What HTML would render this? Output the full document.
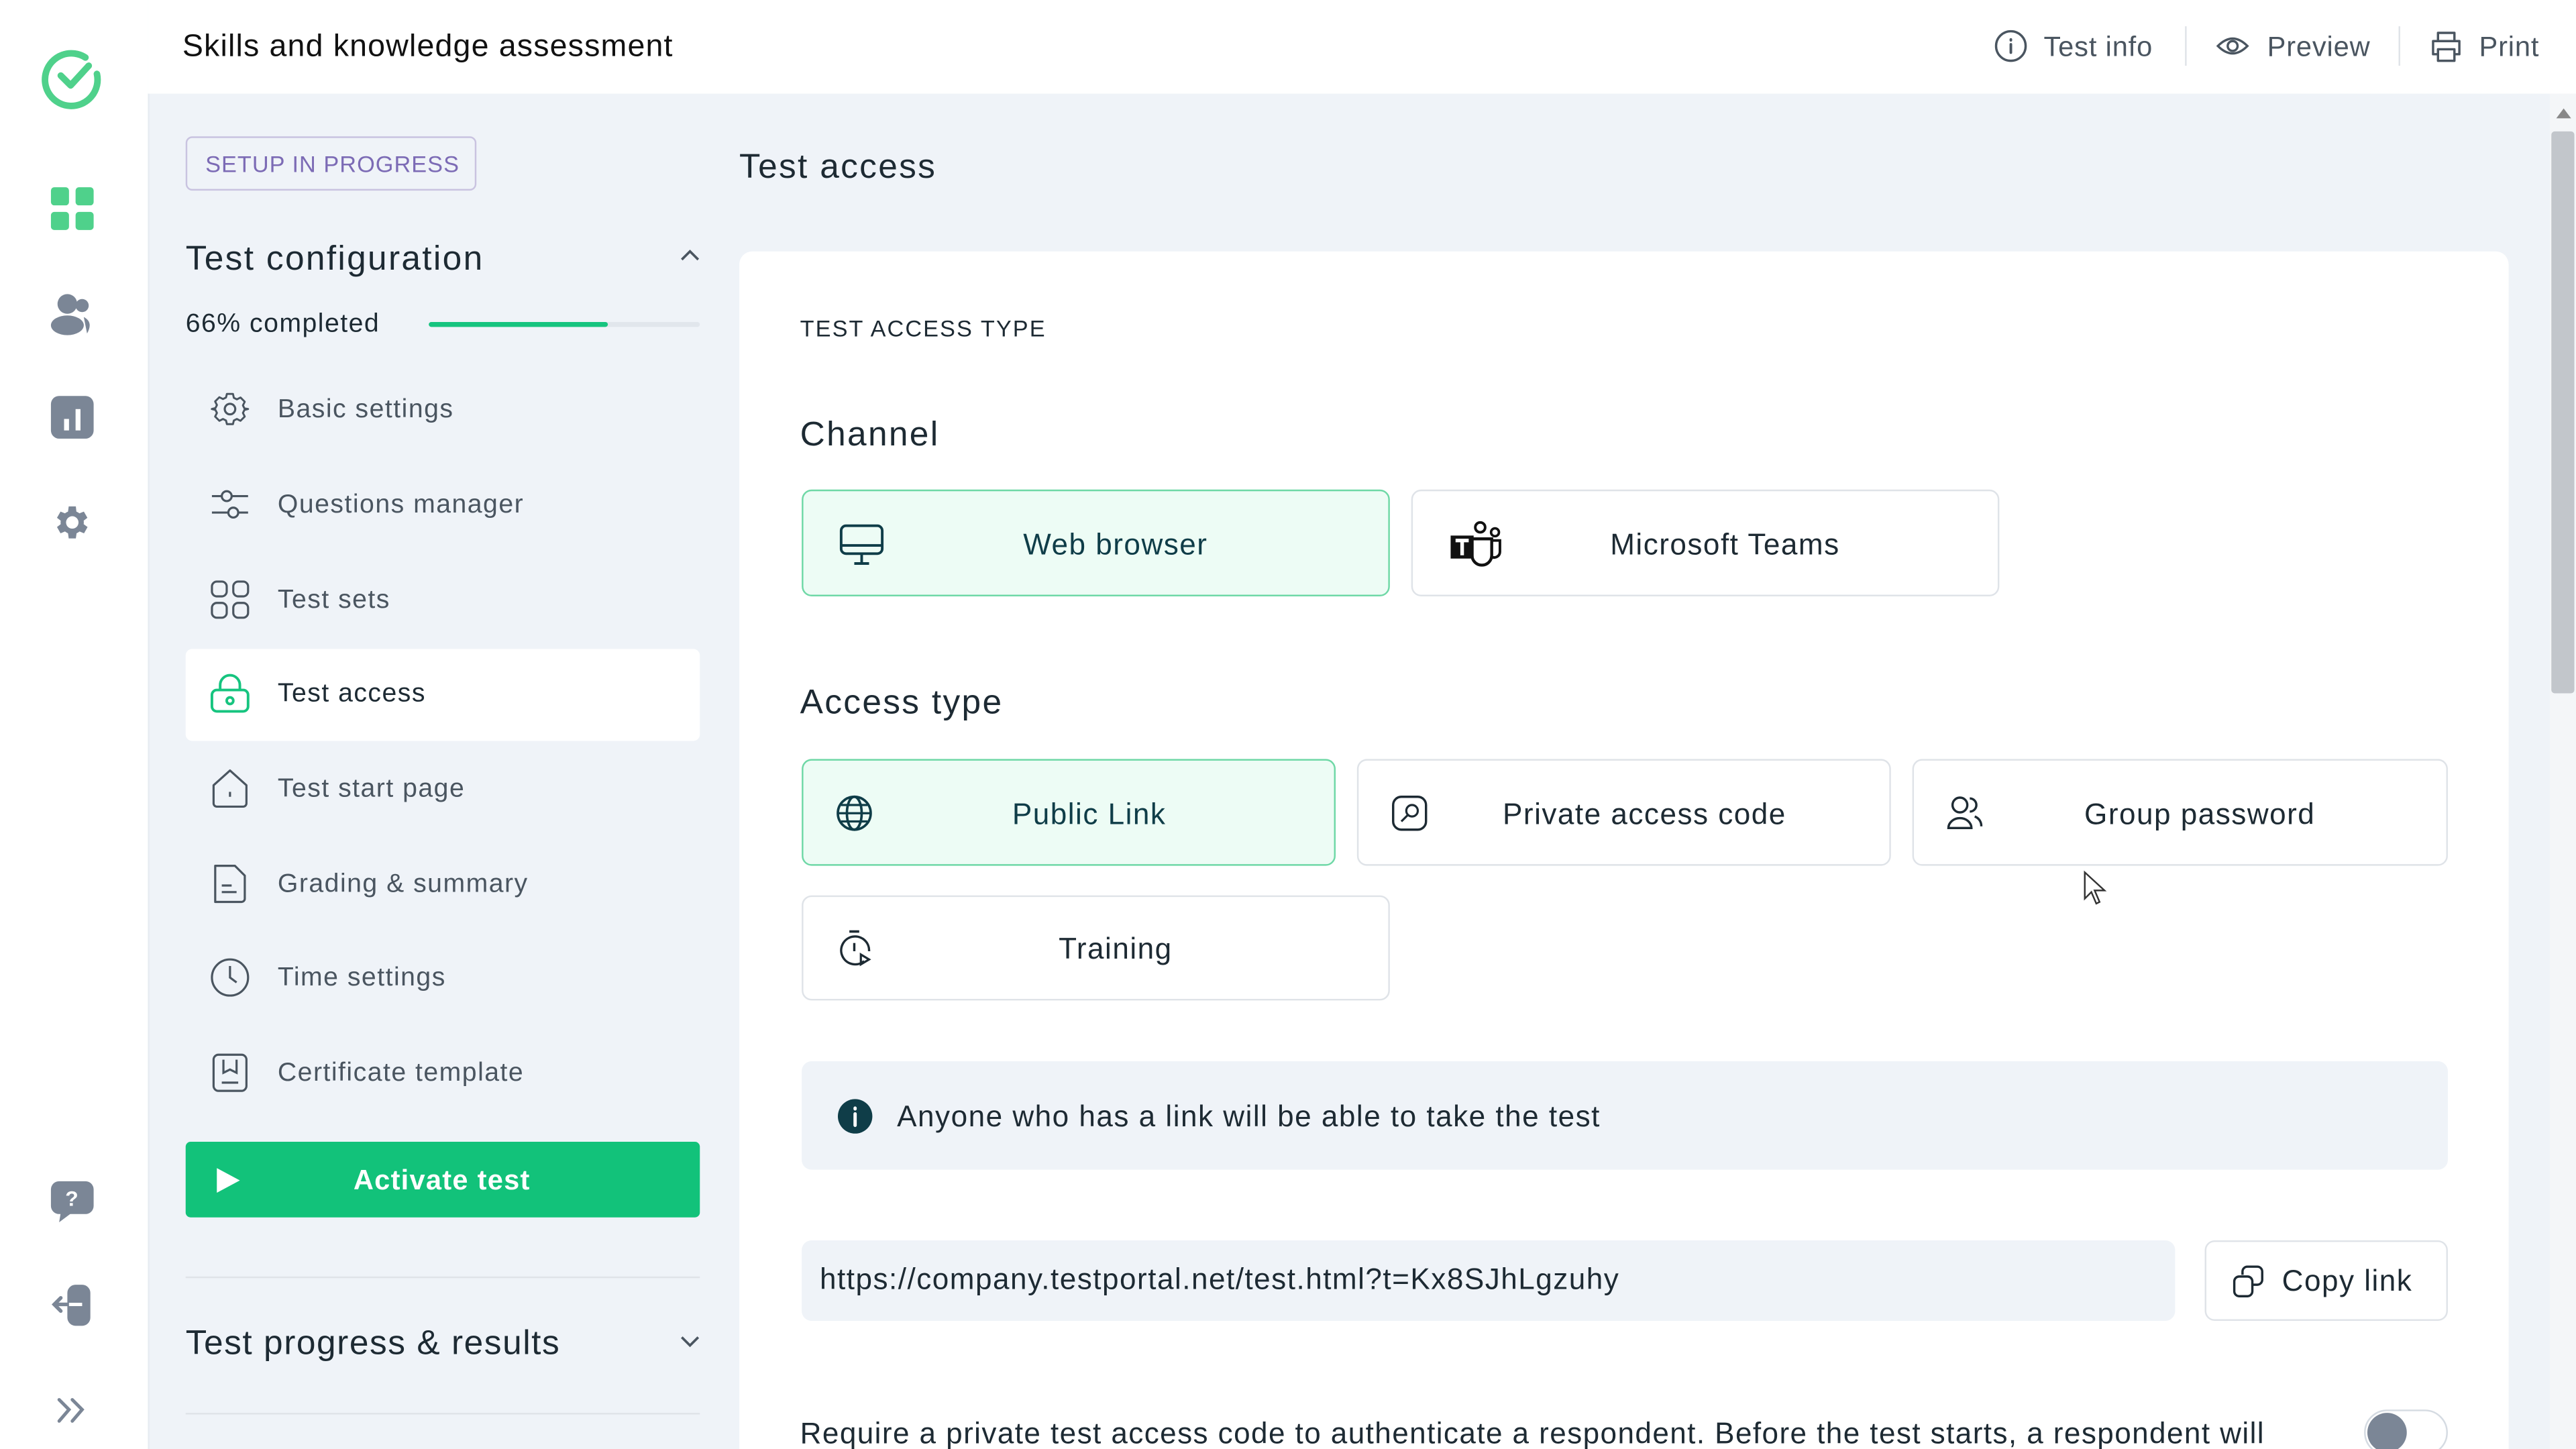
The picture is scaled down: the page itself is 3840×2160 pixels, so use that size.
<!DOCTYPE html>
<html><head><meta charset="utf-8"><style>
html,body{margin:0;padding:0;width:3840px;height:2159px;overflow:hidden;background:#eff3f8}
#f{position:absolute;left:0;top:0;width:1568px;height:882px;transform:scale(2.44898);transform-origin:0 0;font-family:"Liberation Sans",sans-serif;color:#1d2a33;background:#eff3f8;overflow:hidden;letter-spacing:.038em}
.a{position:absolute}
.t{position:absolute;white-space:nowrap;transform:translateY(-45%)}
.h{letter-spacing:.045em}
.rail{left:0;top:0;width:90px;height:882px;background:#fff;border-right:1px solid #e6ebf1}
.hdr{left:90px;top:0;width:1478px;height:57px;background:#fff}
.mi{font-size:16px;color:#4a5560}
.card{position:absolute;border:1px solid #dfe3e8;border-radius:6px;background:#fff;box-sizing:border-box}
.sel{background:#edfcf5;border-color:#6fd8a6}
.ct{position:absolute;top:50%;transform:translate(-50%,-45%);font-size:18px;white-space:nowrap;color:#1d2a33}
.sel .ct{color:#0f3d48}
svg{position:absolute;overflow:visible}
</style></head><body><div id="f">
<div class="a rail"></div>
<svg style="left:26px;top:29px" width="36" height="36" viewBox="0 0 36 36"><path d="M26 6 A16 16 0 1 0 33 16" fill="none" stroke="#4fd18b" stroke-width="4" stroke-linecap="round"/><path d="M11 17 L17 23 L28 11" fill="none" stroke="#4fd18b" stroke-width="4" stroke-linecap="round" stroke-linejoin="round"/></svg>
<svg style="left:31px;top:114px" width="26" height="26"><rect x="0" y="0" width="11" height="11" rx="2" fill="#4fd18b"/><rect x="15" y="0" width="11" height="11" rx="2" fill="#4fd18b"/><rect x="0" y="15" width="11" height="11" rx="2" fill="#4fd18b"/><rect x="15" y="15" width="11" height="11" rx="2" fill="#4fd18b"/></svg>
<svg style="left:31px;top:178px" width="26" height="26"><circle cx="10" cy="7" r="6" fill="#7b8696"/><ellipse cx="10" cy="20" rx="10" ry="6" fill="#7b8696"/><circle cx="19" cy="8" r="4" fill="#7b8696"/><path d="M20 15 q6 3 2 10" fill="#7b8696"/></svg>
<svg style="left:31px;top:241px" width="26" height="26"><rect x="0" y="0" width="26" height="26" rx="5" fill="#7b8696"/><rect x="8" y="14" width="3" height="7" fill="#fff"/><rect x="15" y="8" width="3" height="13" fill="#fff"/></svg>
<svg style="left:31px;top:305px" width="26" height="26" viewBox="0 0 24 24"><path fill="#7b8696" d="M19.4 13a7.5 7.5 0 0 0 0-2l2.1-1.6-2-3.5-2.5 1a7 7 0 0 0-1.7-1L15 3h-4l-.4 2.9a7 7 0 0 0-1.700 1l-2.5-1-2 3.5L6.5 11a7.5 7.5 0 0 0 0 2l-2.1 1.6 2 3.5 2.5-1a7 7 0 0 0 1.7 1L11 21h4l.4-2.9a7 7 0 0 0 1.7-1l2.5 1 2-3.5zM13 15.5a3.5 3.5 0 1 1 0-7 3.5 3.5 0 0 1 0 7z" transform="translate(-1 0)"/></svg>
<svg style="left:31px;top:719px" width="26" height="26"><rect x="0" y="0" width="26" height="20" rx="5" fill="#7b8696"/><path d="M6 19 L5 25 L13 19z" fill="#7b8696"/><text x="13" y="15" font-size="13" font-weight="bold" fill="#fff" text-anchor="middle" font-family="Liberation Sans">?</text></svg>
<svg style="left:31px;top:782px" width="26" height="26"><rect x="10" y="0" width="14" height="25" rx="5" fill="#7b8696"/><path d="M19 12 H2 M6 8 L2 12 L6 16" stroke="#7b8696" stroke-width="2.2" fill="none" stroke-linecap="round"/><path d="M11 12 H19" stroke="#fff" stroke-width="2"/></svg>
<svg style="left:34px;top:851px" width="20" height="16"><path d="M2 1 L8 7 L2 14 M10 1 L16 7 L10 14" stroke="#7b8696" stroke-width="2" fill="none" stroke-linecap="round"/></svg>

<div class="a hdr"></div>
<div class="t" style="left:111px;top:28px;font-size:19px;color:#111;letter-spacing:.025em">Skills and knowledge assessment</div>
<svg style="left:1214px;top:18px" width="20" height="20"><circle cx="10" cy="10" r="9" fill="none" stroke="#4a5560" stroke-width="1.4"/><path d="M10 9v5M10 6v.5" stroke="#4a5560" stroke-width="1.6" stroke-linecap="round"/></svg>
<div class="t mi" style="left:1244px;top:28px;font-size:17px;letter-spacing:.02em">Test info</div>
<div class="a" style="left:1330px;top:16px;width:1px;height:24px;background:#dfe3e8"></div>
<svg style="left:1349px;top:18px" width="20" height="20"><path d="M1 10 Q10 1 19 10 Q10 19 1 10z" fill="none" stroke="#4a5560" stroke-width="1.4"/><circle cx="10" cy="10" r="3" fill="none" stroke="#4a5560" stroke-width="1.4"/></svg>
<div class="t mi" style="left:1380px;top:28px;font-size:17px;letter-spacing:.02em">Preview</div>
<div class="a" style="left:1460px;top:16px;width:1px;height:24px;background:#dfe3e8"></div>
<svg style="left:1479px;top:18px" width="20" height="20"><path d="M5 7V2h10v5M5 15H2V7h16v8h-3M5 12h10v7H5z" fill="none" stroke="#4a5560" stroke-width="1.4" stroke-linejoin="round"/></svg>
<div class="t mi" style="left:1509px;top:28px;font-size:17px;letter-spacing:.02em">Print</div>

<div class="a" style="left:113px;top:83px;width:177px;height:33px;border:1px solid #c9c3e0;border-radius:4px;box-sizing:border-box"></div>
<div class="t" style="left:125px;top:99px;font-size:14px;color:#7c6bb5;letter-spacing:.03em">SETUP IN PROGRESS</div>
<div class="t h" style="left:113px;top:157px;font-size:21px;color:#1d2a33">Test configuration</div>
<svg style="left:414px;top:151px" width="12" height="8"><path d="M1 7 L6 2 L11 7" stroke="#4a5560" stroke-width="1.5" fill="none"/></svg>
<div class="t" style="left:113px;top:197px;font-size:16px;color:#1d2a33">66% completed</div>
<div class="a" style="left:261px;top:196px;width:165px;height:3px;background:#e1e6ec;border-radius:2px"></div>
<div class="a" style="left:261px;top:196px;width:109px;height:3px;background:#16c47f;border-radius:2px"></div>
<div class="a" style="left:113px;top:395px;width:313px;height:56px;background:#fff;border-radius:4px"></div>

<svg style="left:128px;top:237px" width="24" height="24" viewBox="0 0 24 24"><path d="M10 2h4l.6 2.6 2 1 2.4-1.2 2.8 2.8-1.2 2.4 1 2L24 12v0l-2.4.6-1 2 1.2 2.4-2.8 2.8-2.4-1.2-2 1L14 22h-4l-.6-2.4-2-1-2.4 1.2-2.8-2.8 1.2-2.4-1-2L0 12l2.4-.6 1-2L2.2 7l2.8-2.8 2.4 1.2 2-1z" transform="scale(.92) translate(1 1)" fill="none" stroke="#4a5560" stroke-width="1.3" stroke-linejoin="round"/><circle cx="12" cy="12" r="3.2" fill="none" stroke="#4a5560" stroke-width="1.3"/></svg>
<div class="t mi" style="left:169px;top:249px">Basic settings</div>
<svg style="left:128px;top:295px" width="24" height="24"><path d="M1 7h6M13 7h10M1 17h10M17 17h6" stroke="#4a5560" stroke-width="1.3"/><circle cx="10" cy="7" r="3" fill="none" stroke="#4a5560" stroke-width="1.3"/><circle cx="14" cy="17" r="3" fill="none" stroke="#4a5560" stroke-width="1.3"/></svg>
<div class="t mi" style="left:169px;top:307px">Questions manager</div>
<svg style="left:128px;top:353px" width="24" height="24"><rect x="1" y="1" width="9" height="9" rx="3" fill="none" stroke="#4a5560" stroke-width="1.3"/><rect x="14" y="1" width="9" height="9" rx="3" fill="none" stroke="#4a5560" stroke-width="1.3"/><rect x="1" y="14" width="9" height="9" rx="3" fill="none" stroke="#4a5560" stroke-width="1.3"/><rect x="14" y="14" width="9" height="9" rx="3" fill="none" stroke="#4a5560" stroke-width="1.3"/></svg>
<div class="t mi" style="left:169px;top:365px">Test sets</div>
<svg style="left:128px;top:410px" width="24" height="24"><rect x="1" y="10" width="22" height="13" rx="3" fill="none" stroke="#16c47f" stroke-width="1.6"/><path d="M6 10V7a6 6 0 0 1 12 0v3" fill="none" stroke="#16c47f" stroke-width="1.6"/><circle cx="12" cy="16.5" r="2" fill="none" stroke="#16c47f" stroke-width="1.6"/></svg>
<div class="t" style="left:169px;top:422px;font-size:16px;color:#1d2a33">Test access</div>
<svg style="left:128px;top:468px" width="24" height="24"><path d="M2 10 L12 1 L22 10 V21 a2 2 0 0 1-2 2H4a2 2 0 0 1-2-2z" fill="none" stroke="#4a5560" stroke-width="1.3" stroke-linejoin="round"/><path d="M12 14v3" stroke="#4a5560" stroke-width="1.3"/></svg>
<div class="t mi" style="left:169px;top:480px">Test start page</div>
<svg style="left:128px;top:526px" width="24" height="24"><path d="M3 1h12l6 6v14a2 2 0 0 1-2 2H3z" fill="none" stroke="#4a5560" stroke-width="1.3" stroke-linejoin="round"/><path d="M7 13h6M7 17h9" stroke="#4a5560" stroke-width="1.3"/></svg>
<div class="t mi" style="left:169px;top:538px">Grading &amp; summary</div>
<svg style="left:128px;top:583px" width="24" height="24"><circle cx="12" cy="12" r="11" fill="none" stroke="#4a5560" stroke-width="1.3"/><path d="M12 5v7l4 3" fill="none" stroke="#4a5560" stroke-width="1.3"/></svg>
<div class="t mi" style="left:169px;top:595px">Time settings</div>
<svg style="left:128px;top:641px" width="24" height="24"><rect x="2" y="1" width="20" height="22" rx="3" fill="none" stroke="#4a5560" stroke-width="1.3"/><path d="M8 4v8l4-2 4 2V4M7 18h10" fill="none" stroke="#4a5560" stroke-width="1.3"/></svg>
<div class="t mi" style="left:169px;top:653px">Certificate template</div>

<div class="a" style="left:113px;top:695px;width:313px;height:46px;background:#12c27a;border-radius:3px"></div>
<svg style="left:131px;top:710px" width="16" height="17"><path d="M1 1 L15 8.5 L1 16z" fill="#fff"/></svg>
<div class="t" style="left:269px;top:718px;font-size:17px;color:#fff;font-weight:bold;transform:translate(-50%,-45%);letter-spacing:.03em">Activate test</div>
<div class="a" style="left:113px;top:777px;width:313px;height:1px;background:#dfe3e8"></div>
<div class="t" style="left:113px;top:817px;font-size:21px;letter-spacing:.03em">Test progress &amp; results</div>
<svg style="left:414px;top:813px" width="12" height="8"><path d="M1 1 L6 6 L11 1" stroke="#4a5560" stroke-width="1.5" fill="none"/></svg>
<div class="a" style="left:113px;top:860px;width:313px;height:1px;background:#dfe3e8"></div>

<div class="t h" style="left:450px;top:101px;font-size:21px">Test access</div>
<div class="a" style="left:450px;top:153px;width:1077px;height:760px;background:#fff;border-radius:8px"></div>
<div class="t" style="left:487px;top:199px;font-size:14px;letter-spacing:.06em;color:#1d2a33">TEST ACCESS TYPE</div>
<div class="t h" style="left:487px;top:264px;font-size:21px">Channel</div>

<div class="card sel" style="left:488px;top:298px;width:358px;height:65px"><div class="ct" style="left:190px">Web browser</div>
<svg style="left:22px;top:20px" width="28" height="26"><rect x="1" y="1" width="25" height="17" rx="3" fill="none" stroke="#0f3d48" stroke-width="1.6"/><path d="M1 13h25M13.5 18v6M9 24h9" stroke="#0f3d48" stroke-width="1.6"/></svg></div>
<div class="card" style="left:859px;top:298px;width:358px;height:65px"><div class="ct" style="left:190px">Microsoft Teams</div>
<svg style="left:22px;top:18px" width="34" height="30"><circle cx="19" cy="4" r="3" fill="none" stroke="#111" stroke-width="1.6"/><circle cx="28" cy="7" r="2.4" fill="none" stroke="#111" stroke-width="1.5"/><path d="M14 11h12v10a6 6 0 0 1-12 0z" fill="#fff" stroke="#111" stroke-width="1.8"/><path d="M26 12h5v7a3.5 3.5 0 0 1-5 3" fill="none" stroke="#111" stroke-width="1.6"/><rect x="1" y="9" width="14" height="14" fill="#111"/><path d="M4 12h8M8 12v9" stroke="#fff" stroke-width="2.2"/></svg></div>

<div class="t h" style="left:487px;top:427px;font-size:21px">Access type</div>
<div class="card sel" style="left:488px;top:462px;width:325px;height:65px"><div class="ct" style="left:174px">Public Link</div>
<svg style="left:20px;top:21px" width="22" height="22"><circle cx="11" cy="11" r="10" fill="none" stroke="#0f3d48" stroke-width="1.5"/><ellipse cx="11" cy="11" rx="4.5" ry="10" fill="none" stroke="#0f3d48" stroke-width="1.5"/><path d="M1 11h20M3 6h16M3 16h16" stroke="#0f3d48" stroke-width="1.3"/></svg></div>
<div class="card" style="left:826px;top:462px;width:325px;height:65px"><div class="ct" style="left:174px">Private access code</div>
<svg style="left:20px;top:21px" width="22" height="22"><rect x="1" y="1" width="20" height="20" rx="5" fill="none" stroke="#1d2a33" stroke-width="1.4"/><circle cx="12.5" cy="9.5" r="3.5" fill="none" stroke="#1d2a33" stroke-width="1.3"/><path d="M10 12 L6 16" stroke="#1d2a33" stroke-width="1.3"/></svg></div>
<div class="card" style="left:1164px;top:462px;width:326px;height:65px"><div class="ct" style="left:174px">Group password</div>
<svg style="left:20px;top:21px" width="24" height="22"><circle cx="8" cy="6" r="4.5" fill="none" stroke="#1d2a33" stroke-width="1.4"/><path d="M1 20a7 6 0 0 1 14 0z" fill="none" stroke="#1d2a33" stroke-width="1.4"/><path d="M14 2a4 4 0 0 1 0 8M17 13a6 6 0 0 1 4 6" fill="none" stroke="#1d2a33" stroke-width="1.4"/></svg></div>
<div class="card" style="left:488px;top:545px;width:358px;height:64px"><div class="ct" style="left:190px">Training</div>
<svg style="left:21px;top:20px" width="22" height="24"><path d="M7 1h6" stroke="#1d2a33" stroke-width="1.5"/><path d="M16 19 A8.5 8.5 0 1 1 19 13" fill="none" stroke="#1d2a33" stroke-width="1.4"/><path d="M10 8v5" stroke="#1d2a33" stroke-width="1.4"/><path d="M14 15l5 3-5 3z" fill="none" stroke="#1d2a33" stroke-width="1.3"/></svg></div>

<div class="a" style="left:488px;top:646px;width:1002px;height:66px;background:#eff3f8;border-radius:6px"></div>
<svg style="left:510px;top:669px" width="21" height="21"><circle cx="10.5" cy="10.5" r="10.5" fill="#0f3d48"/><path d="M10.5 9v7M10.5 5.5v.5" stroke="#fff" stroke-width="2" stroke-linecap="round"/></svg>
<div class="t" style="left:546px;top:679px;font-size:18px">Anyone who has a link will be able to take the test</div>

<div class="a" style="left:488px;top:755px;width:836px;height:49px;background:#eff3f8;border-radius:6px"></div>
<div class="t" style="left:499px;top:778px;font-size:18px">https://company.testportal.net/test.html?t=Kx8SJhLgzuhy</div>
<div class="card" style="left:1342px;top:755px;width:148px;height:49px"></div>
<svg style="left:1359px;top:770px" width="20" height="20"><rect x="1" y="7" width="11" height="12" rx="3" fill="none" stroke="#1d2a33" stroke-width="1.4"/><path d="M6 6V4a3 3 0 0 1 3-3h6a3 3 0 0 1 3 3v5a3 3 0 0 1-3 3h-3" fill="none" stroke="#1d2a33" stroke-width="1.4"/></svg>
<div class="t" style="left:1389px;top:779px;font-size:18px">Copy link</div>

<div class="t" style="left:487px;top:872px;font-size:18px;letter-spacing:.032em">Require a private test access code to authenticate a respondent. Before the test starts, a respondent will</div>
<div class="a" style="left:1439px;top:858px;width:51px;height:28px;border:1px solid #d5dbe2;border-radius:14px;box-sizing:border-box;background:#fff"></div>
<div class="a" style="left:1441px;top:860px;width:24px;height:24px;border-radius:50%;background:#7b8696"></div>

<svg style="left:1268px;top:530px" width="16" height="22"><path d="M1 1 L1 17 L5 13 L8 20 L10 19 L7 12 L13 12z" fill="#fff" stroke="#333" stroke-width="1"/></svg>
<div class="a" style="left:1552px;top:57px;width:16px;height:825px;background:#f4f6f8"></div>
<svg style="left:1556px;top:66px" width="9" height="6"><path d="M0 6 L4.5 0 L9 6z" fill="#888"/></svg>
<div class="a" style="left:1553px;top:80px;width:14px;height:342px;background:#c2c6cb;border-radius:2px"></div>
</div></body></html>
